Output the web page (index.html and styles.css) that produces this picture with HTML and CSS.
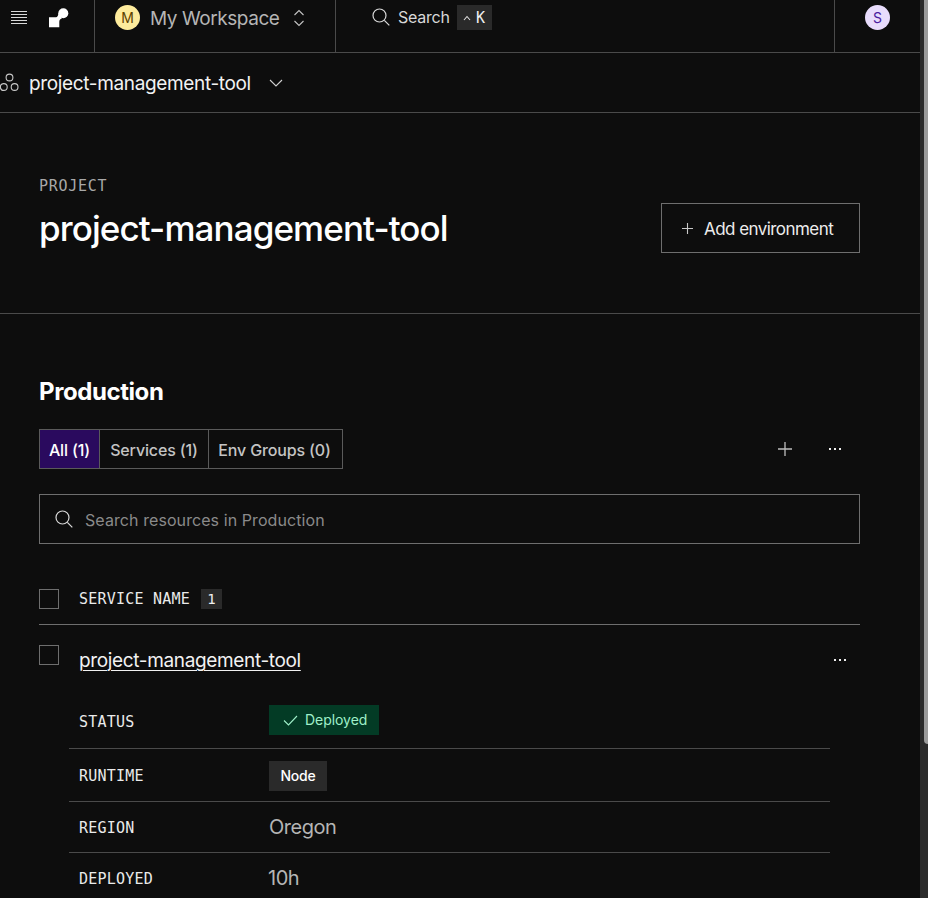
FILE: index.html
```html
<!DOCTYPE html>
<html lang="en">
<head>
<meta charset="utf-8">
<title>project-management-tool</title>
<link rel="stylesheet" href="styles.css">
</head>
<body>
<div class="app">
  <header class="topbar">
    <div class="brand">
      <svg class="icon-menu" width="18" height="14" viewBox="0 0 18 14"><path d="M1 1.500h16M1 4.500h16M1 7.500h16M1 10.500h16M1 13.500h16" stroke="#d8d8d8" stroke-width="1" fill="none"/></svg>
      <svg class="icon-logo" width="20" height="20" viewBox="0 0 20 20"><circle cx="14.300" cy="5.300" r="5" fill="#fff"/><path d="M0 9.300h7c1.500 0 2-2.300 3-4.300l3 5.200c-2 .8-2.700 1.800-2.700 3.800v5.300H0z" fill="#fff"/></svg>
    </div>
    <div class="workspace">
      <span class="avatar avatar-yellow">M</span>
      <span class="workspace-name">My Workspace</span>
      <svg class="updown" width="12" height="18" viewBox="0 0 12 18"><path d="M1.500 6 6 1.500 10.500 6M1.500 12 6 16.500 10.500 12" stroke="#c4c4c4" stroke-width="1.100" fill="none"/></svg>
    </div>
    <div class="search">
      <svg width="18" height="18" viewBox="0 0 18 18"><circle cx="7.500" cy="7.500" r="6.500" stroke="#d8d8d8" stroke-width="1.200" fill="none"/><path d="m12.300 12.300 5 5" stroke="#d8d8d8" stroke-width="1.200"/></svg>
      <span class="search-label">Search</span>
      <span class="kbd"><svg width="8" height="6" viewBox="0 0 8 6"><path d="M1 5 4 1.500 7 5" stroke="#e0e0e0" stroke-width="1.100" fill="none"/></svg><span>K</span></span>
    </div>
    <div class="user"><span class="avatar avatar-purple">S</span></div>
  </header>

  <nav class="subbar">
    <svg width="19" height="19" viewBox="0 0 19 19"><g stroke="#c8c8c8" stroke-width="1.100" fill="none"><circle cx="9.500" cy="4.500" r="3.400"/><circle cx="3.800" cy="14" r="3.400"/><circle cx="14.600" cy="14" r="3.400"/></g></svg>
    <span class="project-crumb">project-management-tool</span>
    <svg class="crumb-chevron" width="14" height="8" viewBox="0 0 14 8"><path d="m1 1 6 6 6-6" stroke="#d0d0d0" stroke-width="1.100" fill="none"/></svg>
  </nav>

  <section class="hero">
    <div>
      <div class="eyebrow">PROJECT</div>
      <h1>project-management-tool</h1>
    </div>
    <button class="add-env" type="button">
      <svg width="11" height="11" viewBox="0 0 11 11"><path d="M5.500 0v11M0 5.500h11" stroke="#c8c8c8" stroke-width="1.100"/></svg>
      <span>Add environment</span>
    </button>
  </section>

  <main class="content">
    <h2>Production</h2>
    <div class="toolbar">
      <div class="tabs">
        <span class="tab tab-active">All (1)</span>
        <span class="tab tab-services">Services (1)</span>
        <span class="tab tab-env">Env Groups (0)</span>
      </div>
      <div class="tools">
        <svg width="14" height="14" viewBox="0 0 14 14"><path d="M7 0v14M0 7h14" stroke="#bdbdbd" stroke-width="1.300"/></svg>
        <span class="dots"><i></i><i></i><i></i></span>
      </div>
    </div>
    <div class="resource-search">
      <svg width="18" height="18" viewBox="0 0 18 18"><circle cx="7.500" cy="7.500" r="6.500" stroke="#d8d8d8" stroke-width="1.200" fill="none"/><path d="m12.300 12.300 5 5" stroke="#d8d8d8" stroke-width="1.200"/></svg>
      <span class="resource-placeholder">Search resources in Production</span>
    </div>
    <div class="list-head">
      <span class="check"></span>
      <span class="mono">SERVICE NAME</span>
      <span class="count">1</span>
    </div>
    <div class="service">
      <span class="check"></span>
      <a class="service-link" href="#">project-management-tool</a>
      <span class="dots"><i></i><i></i><i></i></span>
    </div>
    <dl class="details">
      <div class="row row-status"><dt class="mono">STATUS</dt><dd><span class="badge badge-green"><svg width="15" height="11" viewBox="0 0 15 11"><path d="m1 5.500 4.500 4.500L14 1" stroke="#9ff0c9" stroke-width="1.100" fill="none"/></svg><span class="badge-text">Deployed</span></span></dd></div>
      <div class="row row-runtime"><dt class="mono">RUNTIME</dt><dd><span class="badge badge-grey">Node</span></dd></div>
      <div class="row row-region"><dt class="mono">REGION</dt><dd>Oregon</dd></div>
      <div class="row row-deployed"><dt class="mono">DEPLOYED</dt><dd>10h</dd></div>
    </dl>
  </main>
</div>
<div class="scrollbar"><div class="thumb"></div></div>
</body>
</html>
```
FILE: styles.css
```css
* { box-sizing: border-box; }
html, body { margin: 0; height: 898px; overflow: hidden; background: #0d0d0d; }
body { display: flex; color: #fff; font-family: Inter, "Liberation Sans", sans-serif; }
.app { width: 920px; height: 898px; overflow: hidden; flex: none; }
svg { display: block; flex: none; }

.scrollbar { width: 8px; height: 898px; background: #2b2b2b; padding-left: 4px; flex: none; }
.thumb { height: 744px; background: #9b9b9b; border-radius: 0 0 0 4px; }

.topbar { height: 53px; border-bottom: 1px solid #4a4a4a; display: flex; }
.brand { width: 95px; display: flex; align-items: flex-start; padding: 10px 0 0 10px; border-right: 1px solid #4a4a4a; }
.icon-logo { margin: -2px 0 0 21px; }
.workspace { width: 241px; display: flex; align-items: flex-start; padding: 5px 0 0 20px; border-right: 1px solid #4a4a4a; }
.avatar { display: flex; align-items: center; justify-content: center; border-radius: 50%; font-size: 14px; font-weight: 400; }
.avatar-yellow { width: 25px; height: 25px; background: #fdeb9c; color: #5e4200; }
.workspace-name { margin: 1px 14px 0 10px; font-size: 19px; line-height: 26px; color: #b5b5b5; letter-spacing: -0.44px; }
.updown { margin-top: 4px; }
.search { width: 499px; display: flex; align-items: flex-start; padding: 8px 0 0 36px; border-right: 1px solid #4a4a4a; }
.search-label { margin: -1px 7px 0 8px; font-size: 16px; line-height: 20px; color: #d8d8d8; letter-spacing: -0.25px; }
.kbd { margin-top: -3px; width: 35px; height: 25px; background: #2a2a2a; display: flex; align-items: center; justify-content: center; gap: 5px; font-size: 15px; font-family: "DejaVu Sans Mono", monospace; font-weight: 400; color: #f0f0f0; }
.user { padding: 5px 0 0 30px; }
.avatar-purple { width: 25px; height: 25px; background: #e8dcfc; color: #4a1a9e; font-size: 14px; }

.subbar { height: 60px; border-bottom: 1px solid #4a4a4a; display: flex; align-items: center; }
.project-crumb { margin: 1px 18px 0 10px; font-size: 19px; color: #f2f2f2; letter-spacing: -0.35px; }

.hero { height: 201px; border-bottom: 1px solid #4a4a4a; display: flex; justify-content: space-between; padding: 64px 60px 0 39px; }
.eyebrow { font-family: "DejaVu Sans Mono", monospace; font-size: 15px; line-height: 18px; color: #a8a8a8; letter-spacing: 0.7px; }
h1 { margin: 11px 0 0; font-size: 35px; line-height: 44px; font-weight: 500; letter-spacing: -0.91px; color: #fff; }
.add-env { margin-top: 26px; width: 199px; height: 50px; background: none; border: 1px solid #6e6e6e; display: flex; align-items: center; gap: 11px; padding: 1px 0 0 20px; font: inherit; font-size: 17px; font-weight: 400; color: #ececec; letter-spacing: -0.55px; }
.add-env svg { margin-top: -1px; }

.content { padding: 0 60px 0 39px; }
h2 { margin: 63px 0 0; font-size: 24px; line-height: 30px; font-weight: 700; letter-spacing: -0.42px; color: #fff; }
.toolbar { margin-top: 22px; height: 40px; display: flex; justify-content: space-between; align-items: center; }
.tabs { display: flex; height: 40px; border: 1px solid #5a5a5a; }
.tab { display: flex; align-items: center; justify-content: center; padding-top: 1px; font-size: 16px; font-weight: 500; color: #c4c4c4; letter-spacing: -0.15px; }
.tab-active { width: 60px; background: #2a0a5e; color: #fff; border-right: 1px solid #5a5a5a; }
.tab-services { width: 109px; border-right: 1px solid #5a5a5a; }
.tab-env { width: 133px; padding-right: 2px; }
.tools { display: flex; align-items: center; gap: 37px; padding-right: 19px; }
.dots { display: flex; gap: 3px; }
.dots i { width: 2px; height: 2px; background: #eee; display: block; }
.resource-search { margin-top: 25px; height: 50px; border: 1px solid #6e6e6e; display: flex; align-items: center; gap: 12px; padding-left: 15px; font-size: 16px; color: #8a8a8a; letter-spacing: 0.08px; }
.resource-placeholder { padding-top: 1px; }
.list-head { margin-top: 45px; height: 36px; border-bottom: 1px solid #6e6e6e; display: flex; align-items: flex-start; }
.check { width: 20px; height: 20px; border: 1px solid #6e6e6e; flex: none; }
.mono { font-family: "DejaVu Sans Mono", monospace; font-size: 15px; font-weight: 400; color: #eaeaea; letter-spacing: 0.22px; }
.list-head .mono { margin-left: 20px; line-height: 20px; }
.count { margin-left: 11px; width: 21px; height: 20px; background: #2a2a2a; display: flex; align-items: center; justify-content: center; font-family: "DejaVu Sans Mono", monospace; font-size: 14px; color: #f0f0f0; }
.service { margin-top: 20px; display: flex; align-items: flex-start; }
.service-link { margin: 1px 0 0 20px; font-size: 19px; line-height: 30px; color: #f2f2f2; letter-spacing: -0.35px; text-decoration: underline; text-underline-offset: 3px; text-decoration-thickness: 1px; }
.service .dots { margin: 14px 0 0 auto; padding-right: 14px; }
.details { margin: 16px 30px 0; }
.row { display: flex; align-items: center; border-bottom: 1px solid #4a4a4a; padding-left: 10px; }
.row dt { width: 190px; padding-top: 2px; }
.row dd { margin: 0; font-size: 20px; color: #b5b5b5; letter-spacing: -0.5px; }
.row-status { height: 57px; }
.row-status dt { padding-top: 4px; }
.row-runtime { height: 53px; }
.row-runtime .badge { margin-top: 2px; }
.row-region { height: 51px; }
.row-deployed { height: 50px; border-bottom: 0; }
.row-deployed dd { margin-left: -1px; }
.badge { display: flex; align-items: center; height: 30px; font-size: 14px; letter-spacing: -0.2px; }
.badge-green { width: 110px; background: #033b25; color: #9ff0c9; gap: 7px; padding-left: 14px; letter-spacing: -0.05px; }
.badge-text { padding-bottom: 2px; }
.badge-grey { width: 58px; background: #2a2a2a; color: #fff; font-weight: 500; justify-content: center; padding-bottom: 1px; }
```
